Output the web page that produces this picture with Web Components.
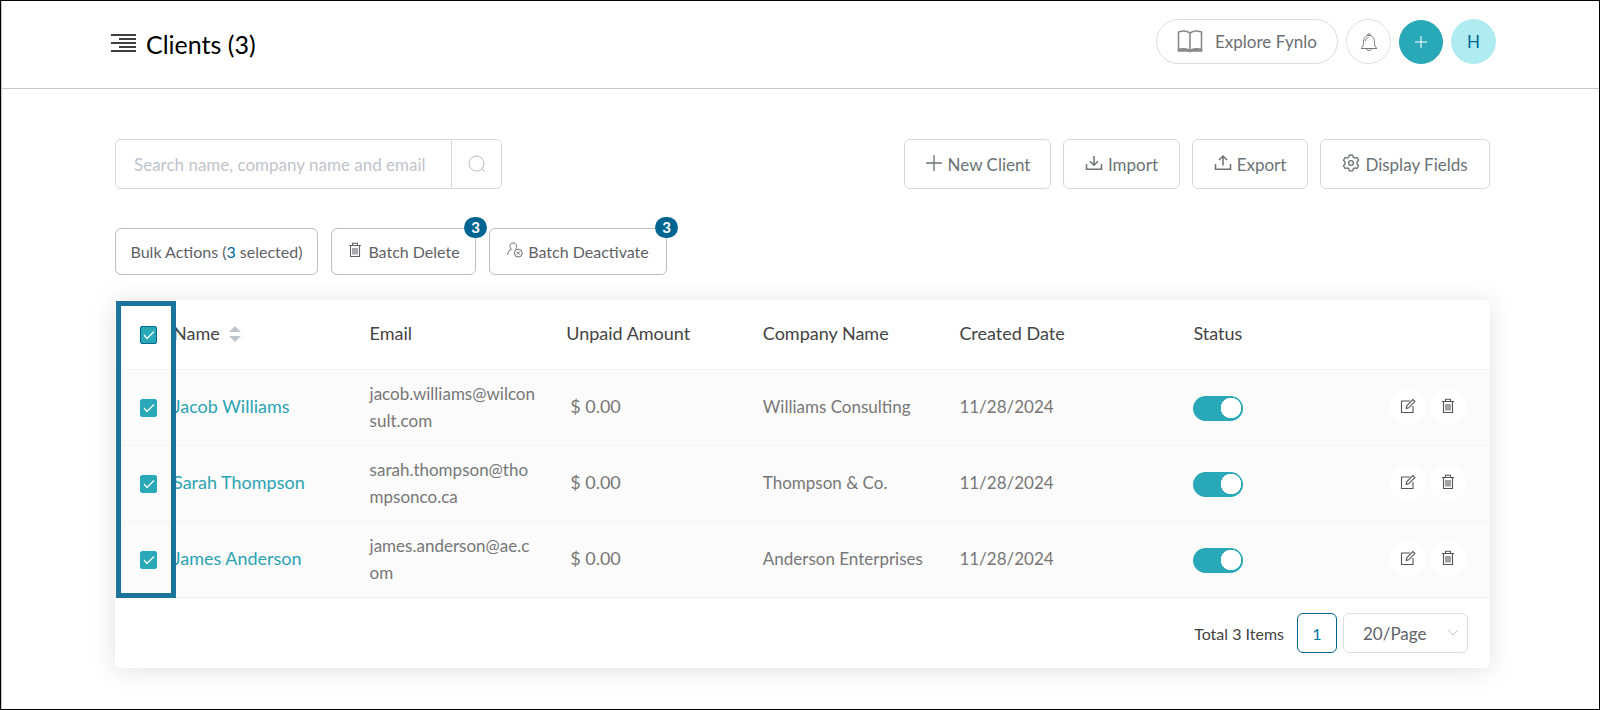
<!DOCTYPE html>
<html lang="en">
<head>
<meta charset="utf-8">
<meta name="viewport" content="width=device-width, initial-scale=1">
<title>Clients</title>
<style>
  body { margin: 0; font-family: Lato, "Open Sans", sans-serif; color: #606266; background: #fff; }
</style>
</head>
<body>
<fy-app></fy-app>

<script>
const define = (name, html, setup) => {
  const template = document.createElement('template');
  template.innerHTML = html;
  customElements.define(name, class extends HTMLElement {
    connectedCallback() {
      if (this.shadowRoot) return;
      this.attachShadow({ mode: 'open' }).append(template.content.cloneNode(true));
      if (setup) setup(this, this.shadowRoot);
    }
  });
};

const ICONS = {
  menu: ['0 0 25 18', '<path d="M0 1h25M8 5h17M0 9h25M8 13h17M0 17h25" stroke-width="1.5"/>'],
  book: ['0 0 26 23', '<path d="M13 3C10 .8 5 .8 1.5 2v17.500c4-1 8.500-1 11.500.8 3-1.800 7.500-1.800 11.500-.8V2C21 .8 16 .8 13 3zM13 3v17" stroke-width="1.6"/><path d="M1 19.500c4-.8 8-.6 11 .8h2c3-1.400 7-1.600 11-.8v1.700H15l-2 .8-2-.8H1z" fill="currentColor" stroke-width="1"/>'],
  bell: ['0 0 18 20', '<path d="M1 16.500c2-1.500 2.500-3 2.500-6C3.500 6 5.500 3.500 9 3.500s5.500 2.500 5.500 7c0 3 .5 4.500 2.500 6zM7.500 3.200a1.500 1.500 0 1 1 3 0M6.500 17c.5 2 4.500 2 5 0M5.600 9c.2-1.800 1.200-3 2.700-3.400"/>'],
  plus: ['0 0 16 16', '<path d="M8 1v14M1 8h14" stroke-width="1.2"/>'],
  search: ['0 0 18 18', '<circle cx="8.500" cy="8.500" r="7.500"/><path d="M13.800 14l3 2.800"/>'],
  download: ['0 0 18 18', '<path d="M1.500 10v5.200h15V10M9 2v9M5 7.300l4 4 4-4" stroke-width="1.5"/>'],
  upload: ['0 0 18 18', '<path d="M1.500 10v5.200h15V10M9 11.500V2.300M5 6l4-4 4 4" stroke-width="1.500"/>'],
  gear: ['0 0 18 18', '<path d="M9 1l1.700.2.6 2.100 1.400.8 2.200-.6 1.600 2.700L15 8v2l1.500 1.800-1.600 2.700-2.200-.6-1.400.8-.6 2.100H7.300l-.6-2.100-1.400-.8-2.200.6-1.600-2.700L3 10V8L1.500 6.200l1.600-2.700 2.200.6 1.400-.8.6-2.100z" stroke-width="1.300"/><circle cx="9" cy="9" r="2.400" stroke-width="1.300"/>'],
  trash: ['0 0 14 16', '<path d="M1 3.500h12M2.500 3.500v11h9v-11M4.500 3V1.200h5V3M5 6v6.500M7 6v6.500M9 6v6.500" stroke-width="1.100"/>'],
  userOff: ['0 0 17 17', '<path d="M.8 13.500c.2-3.200 1.600-5 3.800-5.700C2 5.500 3 1 6.600 1s4.700 4.400 2.200 6.700"/><circle cx="12" cy="11.800" r="4.200"/><path d="M10.300 10.100l3.400 3.400M13.700 10.100l-3.400 3.400"/>'],
  edit: ['0 0 16 16', '<path d="M10 3H1.500v11.500h11.500V8M6.200 10.400l.5-2.600L12.900 1.500l2 2-6.300 6.300z" stroke-width="1.100"/>']
};

/* One glyph of the icon set, sized by its host. */
define('fy-icon', `
  <style>
    :host { display: block; width: 16px; height: 16px; flex: none; }
    svg { display: block; width: 100%; height: 100%; fill: none; stroke: currentColor; stroke-width: 1; }
  </style>
  <svg aria-hidden="true"></svg>`, (host, root) => {
  const [box, shape] = ICONS[host.getAttribute('name')];
  const svg = root.querySelector('svg');
  svg.setAttribute('viewBox', box);
  svg.innerHTML = shape;
});

define('fy-header', `
  <style>
    :host { display: flex; align-items: center; justify-content: space-between; box-sizing: border-box;
      height: 88px; padding: 0 103px 0 110px; border-bottom: 1px solid #c8c8c8; }
    h1 { display: flex; align-items: center; gap: 10px; margin: 0; padding-bottom: 2px; font-size: 25px; line-height: 32px; font-weight: 400; color: #000; }
    h1 fy-icon { width: 25px; height: 18px; margin-bottom: 2px; }
    nav { display: flex; align-items: center; gap: 8px; padding-bottom: 6px; }
    button { display: flex; align-items: center; justify-content: center; box-sizing: border-box; width: 45px; height: 45px;
      padding: 0; border: 1px solid #dcdcdc; border-radius: 23px; background: #fff; color: #6b6f73; font: inherit; font-size: 17px; }
    .explore { width: 182px; gap: 12px; }
    .explore fy-icon { width: 26px; height: 23px; color: #8a8a8a; }
    .bell { border-color: #e0e0e8; }
    .bell fy-icon { width: 18px; height: 20px; color: #777; }
    .add { width: 44px; height: 44px; border-color: #29a8b8; background: #29a8b8; color: #fff; }
    .add fy-icon { width: 14px; height: 14px; }
    .user { border-color: #b0ebf1; background: #b0ebf1; color: #006691; }
  </style>
  <h1><fy-icon name="menu"></fy-icon><span>Clients (3)</span></h1>
  <nav>
    <button class="explore"><fy-icon name="book"></fy-icon><span>Explore Fynlo</span></button>
    <button class="bell" aria-label="Notifications"><fy-icon name="bell"></fy-icon></button>
    <button class="add" aria-label="Add"><fy-icon name="plus"></fy-icon></button>
    <button class="user">H</button>
  </nav>`);

define('fy-search', `
  <style>
    :host { display: flex; box-sizing: border-box; width: 387px; height: 50px; border: 1px solid #d9d9d9; border-radius: 6px; overflow: hidden; }
    input { flex: 1; min-width: 0; box-sizing: border-box; padding: 0 18px; border: 0; background: none; font: inherit; font-size: 17px; color: #606266; }
    input::placeholder { color: #c0c4cc; opacity: 1; }
    button { display: flex; align-items: center; justify-content: center; width: 50px; padding: 0; border: 0; border-left: 1px solid #d9d9d9; background: #fff; color: #b8bac0; }
    fy-icon { width: 18px; height: 18px; }
  </style>
  <input type="text" aria-label="Search clients" placeholder="Search name, company name and email">
  <button aria-label="Search"><fy-icon name="search"></fy-icon></button>`);

/* Outlined button; "icon" names the glyph, "badge" the count on its corner. */
define('fy-button', `
  <style>
    :host { display: block; position: relative; }
    button { display: flex; align-items: center; justify-content: center; box-sizing: border-box; width: 100%; height: 50px; padding: 0;
      border: 1px solid #d9d9d9; border-radius: 6px; background: #fff; color: #6b7375; font: inherit; font-size: 17px; white-space: nowrap; gap: 5px; }
    fy-icon { width: 18px; height: 18px; margin-bottom: 3px; }
    :host([bulk]) button { height: 47px; border-color: #bfbfbf; color: #606266; font-size: 16px; }
    :host([bulk]) fy-icon { width: 16px; height: 16px; }
    b { position: absolute; top: -11px; right: -11px; min-width: 23px; height: 21px; border-radius: 11px; background: #006691;
      color: #fff; font-size: 15px; line-height: 21px; font-weight: 700; text-align: center; }
  </style>
  <button><slot></slot></button>`, (host, root) => {
  const icon = host.getAttribute('icon'), badge = host.getAttribute('badge');
  if (icon) {
    const glyph = document.createElement('fy-icon');
    glyph.setAttribute('name', icon);
    root.querySelector('button').prepend(glyph);
  }
  if (badge) {
    const count = document.createElement('b');
    count.textContent = badge;
    root.append(count);
  }
});

const CLIENTS = [
  ['Jacob Williams', 'jacob.williams@wilcon<br>sult.com', 'Williams Consulting'],
  ['Sarah Thompson', 'sarah.thompson@tho<br>mpsonco.ca', 'Thompson &amp; Co.'],
  ['James Anderson', 'james.anderson@ae.c<br>om', 'Anderson Enterprises']
];

define('fy-client-table', `
  <style>
    :host { display: block; position: relative; }
    table { width: 100%; table-layout: fixed; border-collapse: separate; border-spacing: 0; font-size: 17px; line-height: 27px; text-align: left; color: #777; }
    .check { width: 58px; } .created { width: 234px; } .actions { width: 100px; }
    th, td { padding: 0 0 2px; box-sizing: border-box; white-space: nowrap; vertical-align: middle; }
    th { height: 69px; font-size: 18px; font-weight: 400; color: #444; }
    td { height: 76px; background: #fbfbfb; border-top: 1px solid #f5f5f5; }
    tbody tr:last-child td { height: 77px; border-bottom: 1px solid #ebebef; }
    th:first-child, td:first-child { padding: 0 0 0 25px; }
    a { color: #2aa3b4; text-decoration: none; }
    a, .money { font-size: 18px; }
    .money { padding-left: 4px; }
    .tick { display: block; box-sizing: border-box; width: 17px; height: 18px; margin: 0; appearance: none; border: 1px solid #29a8b8; border-radius: 2px;
      background: #29a8b8 url('data:image/svg+xml,<svg xmlns="http://www.w3.org/2000/svg" viewBox="0 0 15 16"><path d="M3 8l3 3.500L13 4.500" fill="none" stroke="white" stroke-width="1.200"/></svg>') center / 15px 16px; }
    th .tick { border-color: #006691; }
    .switch { display: block; box-sizing: border-box; width: 50px; height: 25px; margin: 4px 0 0; appearance: none; border-radius: 13px;
      background: radial-gradient(circle at 38px 12px, #fff 10px, #29a8b8 10.500px); }
    .tools { display: flex; gap: 4px; }
    .tools button { display: flex; align-items: center; justify-content: center; width: 36px; height: 36px; padding: 0 0 2px; border: 0; border-radius: 18px; background: #fff; color: #555; }
    .sort { display: inline-block; width: 12px; height: 16px; margin-left: 9px; vertical-align: -2px; fill: #c0c4cc; }
    .marker { position: absolute; top: 1px; bottom: 0; left: 1px; box-sizing: border-box; width: 60px; border: 5px solid #1a749c; pointer-events: none; }
  </style>
  <table>
    <colgroup><col class="check"><col><col><col><col><col class="created"><col><col class="actions"></colgroup>
    <thead><tr>
      <th><input class="tick" type="checkbox" aria-label="Select all clients" checked></th>
      <th>Name<svg class="sort" viewBox="0 0 12 16" aria-hidden="true"><path d="M0 6l6-6 6 6zM0 10l6 6 6-6z"/></svg></th>
      <th>Email</th><th>Unpaid Amount</th><th>Company Name</th><th>Created Date</th><th>Status</th><th></th>
    </tr></thead>
    <tbody></tbody>
  </table>
  <div class="marker"></div>`, (host, root) => {
  root.querySelector('tbody').innerHTML = CLIENTS.map(([name, email, company]) => `
    <tr>
      <td><input class="tick" type="checkbox" aria-label="Select ${name}" checked></td>
      <td><a href="#">${name}</a></td>
      <td>${email}</td>
      <td class="money">$ 0.00</td>
      <td>${company}</td>
      <td>11/28/2024</td>
      <td><input class="switch" type="checkbox" role="switch" aria-label="${name} active" checked></td>
      <td><div class="tools">
        <button aria-label="Edit ${name}"><fy-icon name="edit"></fy-icon></button>
        <button aria-label="Delete ${name}"><fy-icon name="trash"></fy-icon></button>
      </div></td>
    </tr>`).join('');
});

define('fy-pagination', `
  <style>
    :host { display: flex; align-items: center; justify-content: flex-end; box-sizing: border-box; height: 70px; padding: 0 22px; font-size: 16px; color: #444; }
    button { box-sizing: border-box; width: 40px; height: 40px; margin: 0 6px 0 13px; padding: 0; border: 1px solid #006691; border-radius: 6px; background: #fff; color: #0076a5; font: inherit; }
    select { box-sizing: border-box; width: 125px; height: 40px; padding: 0 19px; appearance: none; border: 1px solid #dcdfe6; border-radius: 6px; color: #606266; font: inherit; font-size: 17px;
      background: #fff url('data:image/svg+xml,<svg xmlns="http://www.w3.org/2000/svg" viewBox="0 0 12 8"><path d="M1 1l5 5 5-5" fill="none" stroke="%23c0c4cc"/></svg>') no-repeat right 8px center / 12px 8px; }
  </style>
  <span>Total 3 Items</span>
  <button aria-label="Page 1">1</button>
  <select aria-label="Page size"><option>20/Page</option></select>`);

define('fy-app', `
  <style>
    :host { display: block; box-sizing: border-box; min-height: 100vh; border: 1px solid #000; box-shadow: inset 1px 0 #ccc; }
    main { padding: 50px 109px 40px 114px; }
    .bar { display: flex; align-items: center; justify-content: space-between; }
    .group { display: flex; gap: 12px; }
    .bulk { gap: 13px; margin: 39px 0 25px; }
    .w147 { width: 147px; } .w117 { width: 117px; } .w116 { width: 116px; } .w170 { width: 170px; }
    .w203 { width: 203px; } .w145 { width: 145px; } .w178 { width: 178px; }
    .count { color: #006691; }
    .card { border-radius: 6px; background: #fff; box-shadow: 0 2px 24px rgba(0, 0, 0, .12); }
  </style>
  <fy-header></fy-header>
  <main>
    <div class="bar">
      <fy-search></fy-search>
      <div class="group">
        <fy-button class="w147" icon="plus">New Client</fy-button>
        <fy-button class="w117" icon="download">Import</fy-button>
        <fy-button class="w116" icon="upload">Export</fy-button>
        <fy-button class="w170" icon="gear">Display Fields</fy-button>
      </div>
    </div>
    <div class="group bulk">
      <fy-button class="w203" bulk><span>Bulk Actions (<span class="count">3</span> selected)</span></fy-button>
      <fy-button class="w145" bulk icon="trash" badge="3">Batch Delete</fy-button>
      <fy-button class="w178" bulk icon="userOff" badge="3">Batch Deactivate</fy-button>
    </div>
    <section class="card">
      <fy-client-table></fy-client-table>
      <fy-pagination></fy-pagination>
    </section>
  </main>`);
</script>
</body>
</html>
